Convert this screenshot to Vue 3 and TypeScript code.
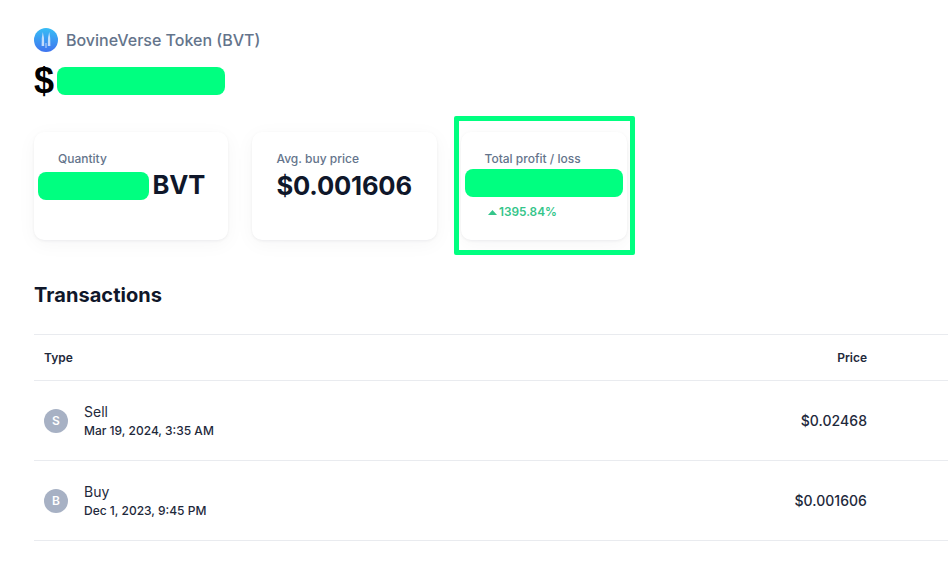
<script setup lang="ts">
interface Tx { letter: string; type: string; date: string; price: string }
const rows: Tx[] = [
  { letter: 'S', type: 'Sell', date: 'Mar 19, 2024, 3:35 AM', price: '$0.02468' },
  { letter: 'B', type: 'Buy', date: 'Dec 1, 2023, 9:45 PM', price: '$0.001606' },
]
</script>

<template>
  <main class="page">
    <header class="token">
      <svg class="logo" width="24" height="24" viewBox="0 0 24 24">
        <defs>
          <linearGradient id="lg" x1="0" y1="0" x2="0" y2="1">
            <stop offset="0" stop-color="#37bdf5" />
            <stop offset="1" stop-color="#3f74ef" />
          </linearGradient>
        </defs>
        <circle cx="12" cy="12" r="12" fill="url(#lg)" />
        <path d="M8.8 4 L10 10 L10.2 18 H7.6 L7.8 10 Z" fill="#e4f0ff" opacity=".8" />
        <path d="M15.2 4 L16.2 10 L16.4 18 H13.8 L14 10 Z" fill="#e4f0ff" opacity=".8" />
        <rect x="11.5" y="15" width="1" height="5" fill="#eaf4ff" opacity=".75" />
      </svg>
      <span class="token-name">BovineVerse Token (BVT)</span>
    </header>

    <div class="balance">
      <span class="dollar">$</span>
      <span class="redact balance-redact"></span>
    </div>

    <section class="cards">
      <article class="card card-a">
        <div class="label">Quantity</div>
        <div class="qty">
          <span class="redact qty-redact"></span>
          <span class="value">BVT</span>
        </div>
      </article>
      <article class="card card-b">
        <div class="label">Avg. buy price</div>
        <div class="value">$0.001606</div>
      </article>
      <article class="card card-c">
        <span class="highlight"></span>
        <div class="label">Total profit / loss</div>
        <span class="redact pl-redact"></span>
        <div class="change">
          <svg width="9" height="5" viewBox="0 0 9 5"><path d="M4.5 0 L9 5 H0 Z" fill="#34c58a" /></svg>
          <span>1395.84%</span>
        </div>
      </article>
    </section>

    <h2 class="title">Transactions</h2>

    <div class="table">
      <div class="row head">
        <span>Type</span>
        <span>Price</span>
      </div>
      <div v-for="r in rows" :key="r.letter" class="row item">
        <div class="who">
          <span class="avatar">{{ r.letter }}</span>
          <div class="who-text">
            <div class="type">{{ r.type }}</div>
            <div class="date">{{ r.date }}</div>
          </div>
        </div>
        <span class="price">{{ r.price }}</span>
      </div>
    </div>
  </main>
</template>

<style scoped>
.page {
  box-sizing: border-box;
  width: 948px;
  height: 587px;
  overflow: hidden;
  padding: 28px 0 0 34px;
  background: #fff;
  font-family: Inter, "Noto Sans", sans-serif;
  color: #0f172a;
}
.token {
  display: flex;
  align-items: center;
  gap: 8px;
  height: 24px;
}
.logo { display: block; flex: none; }
.token-name {
  font-size: 16px;
  font-weight: 500;
  color: #64748b;
}
.balance {
  display: flex;
  align-items: center;
  height: 28px;
  margin-top: 15px;
}
.dollar {
  width: 23px;
  font-family: "Liberation Sans", sans-serif;
  font-size: 36px;
  font-weight: 700;
  line-height: 28px;
  color: #000;
}
.redact {
  display: block;
  height: 28px;
  border-radius: 8px;
  background: #00ff80;
}
.balance-redact { width: 168px; }
.cards {
  display: flex;
  gap: 24px;
  margin-top: 37px;
}
.card {
  position: relative;
  box-sizing: border-box;
  height: 108px;
  padding-top: 19px;
  border-radius: 10px;
  background: #fff;
  box-shadow: 0 1px 3px rgba(15, 23, 42, .06), 0 4px 20px rgba(15, 23, 42, .04);
}
.card-a { width: 194px; padding-left: 24px; }
.card-b { width: 185px; padding-left: 24.5px; }
.card-c { width: 166px; padding-left: 23.5px; }
.label {
  font-size: 12px;
  font-weight: 500;
  line-height: 15px;
  color: #64748b;
}
.value {
  font-size: 25.6px;
  font-weight: 700;
  letter-spacing: -0.2px;
  line-height: 34px;
  color: #0f172a;
}
.card-b .value { margin-top: 3px; }
.qty {
  display: flex;
  align-items: center;
  gap: 3.5px;
  margin: 6px 0 0 -20px;
}
.qty-redact { width: 111px; }
.qty .value { line-height: 26px; margin-top: -2px; }
.pl-redact {
  width: 158px;
  margin: 3px 0 0 -19.5px;
}
.change {
  display: flex;
  align-items: center;
  gap: 2px;
  margin: 8px 0 0 3.5px;
  font-size: 11.8px;
  font-weight: 600;
  line-height: 15px;
  color: #34c58a;
}
.highlight {
  position: absolute;
  left: -7px;
  top: -16px;
  width: 181px;
  height: 139px;
  box-sizing: border-box;
  border: 5px solid #00ff80;
  border-radius: 2px;
  pointer-events: none;
}
.title {
  margin: 43px 0 0;
  font-size: 20px;
  font-weight: 700;
  letter-spacing: 0.06px;
  line-height: 24px;
  color: #0f172a;
}
.table {
  margin-top: 27px;
  border-top: 1px solid #e9ebef;
}
.row {
  display: flex;
  align-items: center;
  justify-content: space-between;
  box-sizing: border-box;
  padding: 0 81px 0 10px;
  border-bottom: 1px solid #e9ebef;
}
.head {
  height: 46px;
  font-size: 12px;
  font-weight: 600;
  color: #1e293b;
}
.item { height: 80px; }
.who {
  display: flex;
  align-items: center;
  gap: 16px;
}
.who-text { margin-top: 2px; }
.avatar {
  display: flex;
  align-items: center;
  justify-content: center;
  width: 24px;
  height: 24px;
  border-radius: 50%;
  background: #a7b1c4;
  color: #fff;
  font-size: 12px;
  font-weight: 600;
}
.type {
  font-size: 14px;
  line-height: 18px;
  color: #1e293b;
}
.date {
  margin-top: 1px;
  font-size: 12px;
  font-weight: 500;
  line-height: 18px;
  color: #1e293b;
}
.price {
  font-size: 14px;
  font-weight: 500;
  letter-spacing: 0.05px;
  color: #1e293b;
}
</style>
